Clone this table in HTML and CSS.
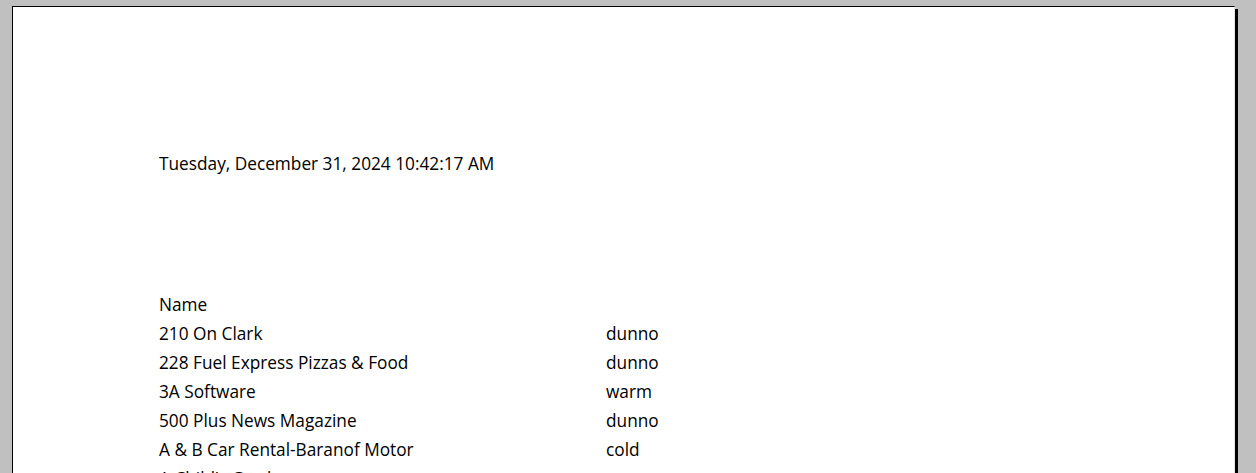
FILE: index.html
```html
<!DOCTYPE html>
<html>
<head>
<meta charset="utf-8">
<link rel="stylesheet" href="styles.css">
</head>
<body>
<div class="page">
  <div class="date">Tuesday, December 31, 2024 10:42:17 AM</div>
  <div class="table">
    <div class="row"><span class="name">Name</span><span class="val"></span></div>
    <div class="row"><span class="name">210 On Clark</span><span class="val">dunno</span></div>
    <div class="row"><span class="name">228 Fuel Express Pizzas &amp; Food</span><span class="val">dunno</span></div>
    <div class="row"><span class="name">3A Software</span><span class="val">warm</span></div>
    <div class="row"><span class="name">500 Plus News Magazine</span><span class="val">dunno</span></div>
    <div class="row"><span class="name">A &amp; B Car Rental-Baranof Motor</span><span class="val">cold</span></div>
    <div class="row"><span class="name">A Child's Garden</span><span class="val">warm</span></div>
  </div>
</div>
</body>
</html>
```
FILE: styles.css
```css
html, body {
  margin: 0;
  padding: 0;
  height: 100%;
  overflow: hidden;
}
body {
  background: #c0c0c0;
  font-family: "Open Sans", "Noto Sans", sans-serif;
  font-size: 17.25px;
  color: #000;
}
.page {
  margin: 6px 0 0 12px;
  width: 1223px;
  height: 600px;
  background: #fff;
  border-left: 1px solid #000;
  border-top: 1px solid #000;
  border-right: 1px solid #e4e4e4;
  box-shadow: 3px 3px 0 #000;
  padding: 142px 0 0 146px;
  box-sizing: border-box;
}
.date {
  line-height: 29px;
  height: 29px;
}
.table {
  margin-top: 112px;
}
.row {
  display: grid;
  grid-template-columns: 447px auto;
  line-height: 29px;
  height: 29px;
}
```
